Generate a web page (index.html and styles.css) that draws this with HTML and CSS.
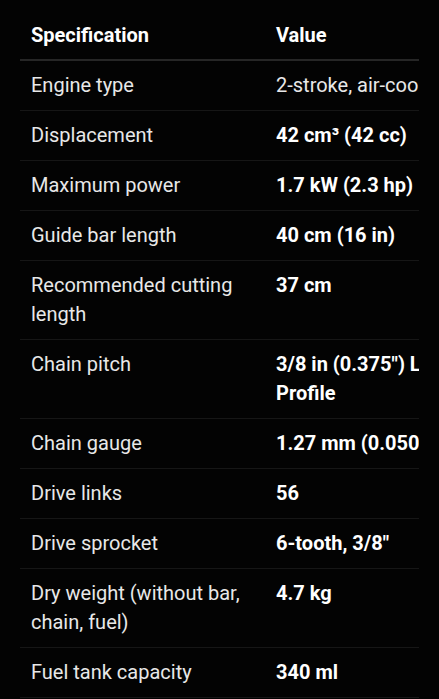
FILE: index.html
```html
<!DOCTYPE html>
<html lang="en">
<head>
  <meta charset="UTF-8">
  <meta name="viewport" content="width=device-width, initial-scale=1.0">
  <title>Chainsaw Specifications</title>
  <link rel="stylesheet" href="styles.css">
</head>
<body>
  <div class="table-wrap">
    <table class="spec-table">
      <colgroup>
        <col class="col-spec">
        <col class="col-value">
      </colgroup>
      <thead>
        <tr>
          <th>Specification</th>
          <th>Value</th>
        </tr>
      </thead>
      <tbody>
        <tr>
          <td>Engine type</td>
          <td class="plain">2-stroke, air-cooled</td>
        </tr>
        <tr>
          <td>Displacement</td>
          <td class="val">42 cm³ (42 cc)</td>
        </tr>
        <tr>
          <td>Maximum power</td>
          <td class="val">1.7 kW (2.3 hp)</td>
        </tr>
        <tr>
          <td>Guide bar length</td>
          <td class="val">40 cm (16 in)</td>
        </tr>
        <tr>
          <td>Recommended cutting length</td>
          <td class="val">37 cm</td>
        </tr>
        <tr>
          <td>Chain pitch</td>
          <td class="val">3/8 in (0.375") Low Profile</td>
        </tr>
        <tr>
          <td>Chain gauge</td>
          <td class="val">1.27 mm (0.050")</td>
        </tr>
        <tr>
          <td>Drive links</td>
          <td class="val">56</td>
        </tr>
        <tr>
          <td>Drive sprocket</td>
          <td class="val">6-tooth, 3/8"</td>
        </tr>
        <tr>
          <td>Dry weight (without bar, chain, fuel)</td>
          <td class="val">4.7 kg</td>
        </tr>
        <tr>
          <td>Fuel tank capacity</td>
          <td class="val">340 ml</td>
        </tr>
      </tbody>
    </table>
  </div>
</body>
</html>
```

FILE: styles.css
```css
/* Global */
body {
  margin: 0;
  background-color: #030303;
  color: #e8e8e8;
  font-family: Roboto, "Noto Sans", sans-serif;
}

.table-wrap {
  margin: 11px 20px 0;
  overflow: hidden;
}

/* Table */
.spec-table {
  border-collapse: collapse;
  table-layout: fixed;
  width: 467px;
  font-size: 20px;
  line-height: 29px;
}

.col-spec {
  width: 245px;
}

.col-value {
  width: 222px;
}

th, td {
  padding: 10px 11px;
  text-align: left;
  vertical-align: top;
}

th {
  color: #ffffff;
  font-weight: bold;
  padding-bottom: 9px;
  border-bottom: 2px solid #262626;
}

td {
  border-bottom: 1px solid #161616;
}

td.val {
  color: #ffffff;
  font-weight: bold;
}

td.plain {
  white-space: nowrap;
}
```
